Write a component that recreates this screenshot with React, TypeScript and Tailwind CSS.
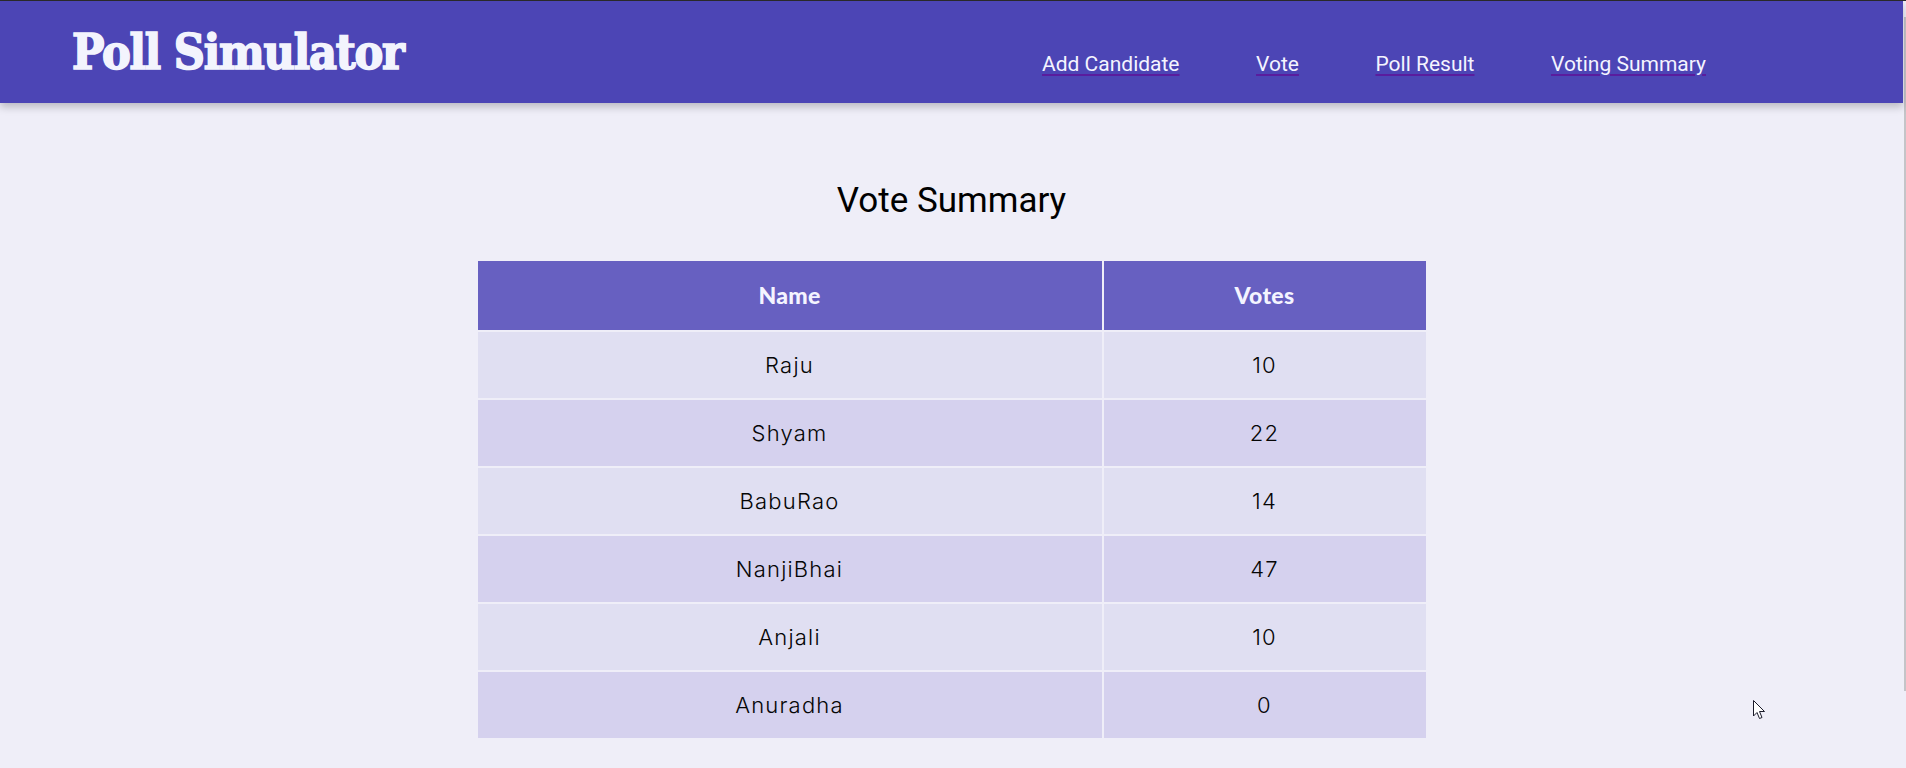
const candidates = [
    { name: "Raju", votes: 10 },
    { name: "Shyam", votes: 22 },
    { name: "BabuRao", votes: 14 },
    { name: "NanjiBhai", votes: 47 },
    { name: "Anjali", votes: 10 },
    { name: "Anuradha", votes: 0 },
];

const links = ["Add Candidate", "Vote", "Poll Result", "Voting Summary"];

const App = () => {
    return (
        <div className="relative flex min-h-screen flex-col bg-[#efeef8]">
            <div className="h-px w-full bg-[#2b2b2b]"></div>
            <div className="flex flex-1">
                <div className="flex-1">
                    <header className="relative z-10 flex h-[102px] items-start bg-[#4c45b5] pl-[72px] shadow-[0_4px_8px_rgba(0,0,0,0.22)]">
                        <h1 className="mt-[23px] font-['DejaVu_Serif_Condensed','DejaVu_Serif',serif] text-[48px] leading-[56px] font-bold tracking-[-1.2px] text-[#f3f4fd] [-webkit-text-stroke:1.6px_#f3f4fd]">
                            Poll Simulator
                        </h1>
                        <nav className="mt-[51px] mr-[197px] ml-auto flex w-[664px] justify-between">
                            {links.map((link) => (
                                <a
                                    key={link}
                                    href="#"
                                    className="font-['Roboto',sans-serif] text-[21px] leading-[24px] text-[#f4f4ff] underline decoration-[#5a1c9e] decoration-2 underline-offset-[3px]"
                                >
                                    {link}
                                </a>
                            ))}
                        </nav>
                    </header>
                    <main className="flex flex-col items-center">
                        <h2 className="mt-[77px] font-['Roboto',sans-serif] text-[35px] leading-[41px] text-black">
                            Vote Summary
                        </h2>
                        <table className="mt-[38px] w-[952px] table-fixed border-separate border-spacing-[2px]">
                            <thead>
                                <tr>
                                    <th className="h-[69px] w-[624px] bg-[#6760c1] p-0 text-center align-middle font-['Lato',sans-serif] text-[23px] font-black tracking-[0.3px] text-[#f4f4ff]">
                                        Name
                                    </th>
                                    <th className="h-[69px] bg-[#6760c1] p-0 text-center align-middle font-['Lato',sans-serif] text-[23px] font-black tracking-[0.3px] text-[#f4f4ff]">
                                        Votes
                                    </th>
                                </tr>
                            </thead>
                            <tbody>
                                {candidates.map((c, i) => (
                                    <tr
                                        key={c.name}
                                        className={
                                            i % 2 === 0
                                                ? "bg-[#e0dff2]"
                                                : "bg-[#d5d1ee]"
                                        }
                                    >
                                        <td className="h-[66px] p-0 text-center align-middle font-['Inter',sans-serif] text-[22px] font-light tracking-[1.2px] text-[#050505]">
                                            {c.name}
                                        </td>
                                        <td className="h-[66px] p-0 text-center align-middle font-['Inter',sans-serif] text-[22px] font-light tracking-[1.2px] text-[#050505]">
                                            {c.votes}
                                        </td>
                                    </tr>
                                ))}
                            </tbody>
                        </table>
                    </main>
                </div>
                <div className="w-[3px] bg-[#efeef8]">
                    <div className="mt-[16px] ml-auto h-[674px] w-[2px] bg-[#c4c4c8]"></div>
                </div>
            </div>
            <svg
                className="absolute top-[700px] left-[1753px]"
                width="13"
                height="20"
                viewBox="0 0 13 20"
            >
                <path
                    d="M0.5 0.5 L0.5 16 L4 12.5 L6.5 18.5 L9 17.5 L6.5 11.5 L11.5 11.5 Z"
                    fill="#ffffff"
                    stroke="#1a1a2a"
                    strokeWidth="1"
                />
            </svg>
        </div>
    );
};

export default App;
